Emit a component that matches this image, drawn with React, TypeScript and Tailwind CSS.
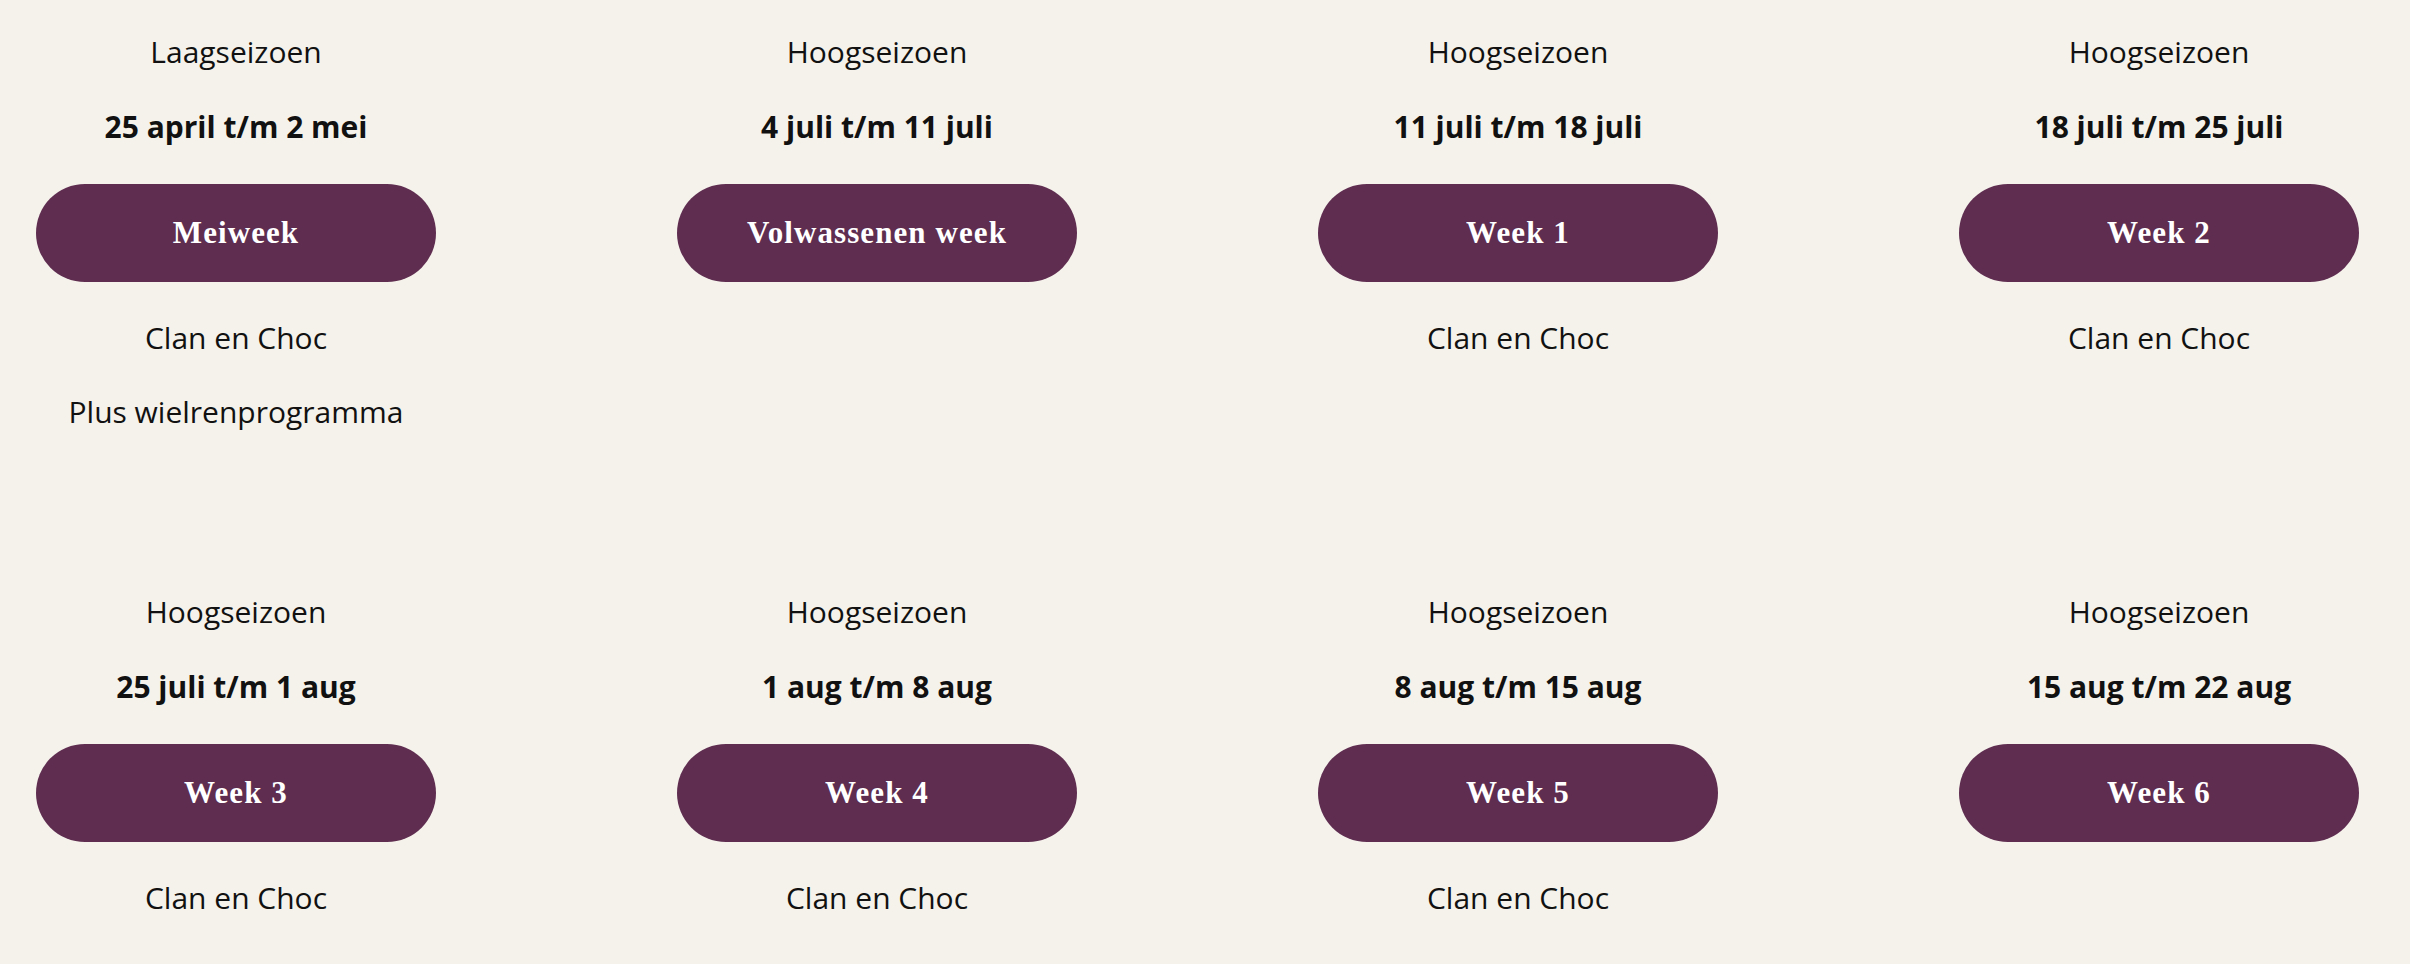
const weeks = [
  { season: 'Laagseizoen', dates: '25 april t/m 2 mei', name: 'Meiweek', extra: ['Clan en Choc', 'Plus wielrenprogramma'] },
  { season: 'Hoogseizoen', dates: '4 juli t/m 11 juli', name: 'Volwassenen week', extra: [] },
  { season: 'Hoogseizoen', dates: '11 juli t/m 18 juli', name: 'Week 1', extra: ['Clan en Choc'] },
  { season: 'Hoogseizoen', dates: '18 juli t/m 25 juli', name: 'Week 2', extra: ['Clan en Choc'] },
  { season: 'Hoogseizoen', dates: '25 juli t/m 1 aug', name: 'Week 3', extra: ['Clan en Choc'] },
  { season: 'Hoogseizoen', dates: '1 aug t/m 8 aug', name: 'Week 4', extra: ['Clan en Choc'] },
  { season: 'Hoogseizoen', dates: '8 aug t/m 15 aug', name: 'Week 5', extra: ['Clan en Choc'] },
  { season: 'Hoogseizoen', dates: '15 aug t/m 22 aug', name: 'Week 6', extra: [] },
]

export default function App() {
  return (
    <div className="min-h-screen bg-[#f5f2eb] text-[#111111] font-['Open_Sans',sans-serif]">
      <div className="grid grid-cols-[repeat(4,400px)] gap-x-[241px] gap-y-[160px] pl-[36px] pt-[32px]">
        {weeks.map((w) => (
          <div key={w.name} className="flex flex-col items-center text-center">
            <p className="text-[30px] leading-[40px]">{w.season}</p>
            <p className="mt-[35px] text-[30px] leading-[40px] font-bold">{w.dates}</p>
            <a
              href="#"
              className="mt-[37px] flex h-[98px] w-[400px] items-center justify-center rounded-full bg-[#5e2d50] text-white font-['Liberation_Serif',serif] font-bold text-[31px] tracking-[0.035em]"
            >
              {w.name}
            </a>
            {w.extra.map((e, i) => (
              <p key={e} className={`${i === 0 ? 'mt-[36px]' : 'mt-[34px]'} text-[30px] leading-[40px]`}>
                {e}
              </p>
            ))}
          </div>
        ))}
      </div>
    </div>
  )
}
